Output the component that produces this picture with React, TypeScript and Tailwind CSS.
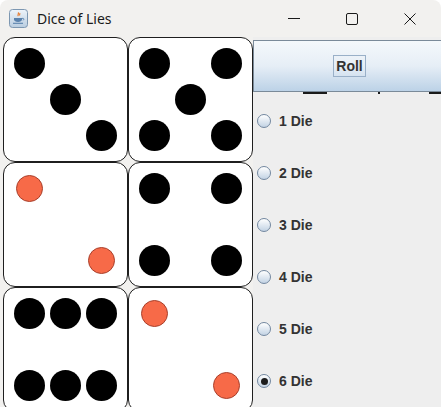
import React from 'react'

type Pip = 'black' | 'red'

const dice: { pips: number[]; kind: Pip }[] = [
  { pips: [0, 4, 8], kind: 'black' },
  { pips: [0, 2, 4, 6, 8], kind: 'black' },
  { pips: [0, 8], kind: 'red' },
  { pips: [0, 2, 6, 8], kind: 'black' },
  { pips: [0, 1, 2, 6, 7, 8], kind: 'black' },
  { pips: [0, 8], kind: 'red' },
]

const counts = [1, 2, 3, 4, 5, 6]

const JavaIcon: React.FC = () => (
  <svg width="19" height="19" viewBox="0 0 19 19">
    <defs>
      <linearGradient id="jbg" x1="0" y1="0" x2="0" y2="1">
        <stop offset="0" stopColor="#eef4fa" />
        <stop offset="1" stopColor="#b9cde0" />
      </linearGradient>
    </defs>
    <rect x="0.5" y="0.5" width="18" height="18" rx="3" fill="url(#jbg)" stroke="#7d97b1" />
    <path d="M9 3.5c1.5 1.2-1 2.2 0.3 3.6M10.6 4.2c0.9 0.8-0.6 1.4 0.2 2.3" stroke="#e8731f" strokeWidth="1.1" fill="none" />
    <path d="M5 9h8v1.2c0 1.8-1.7 2.8-4 2.8s-4-1-4-2.8z" fill="#5a82ad" />
    <path d="M13 9.4h1.2c0.9 0 0.9 1.8-0.4 1.8" stroke="#5a82ad" strokeWidth="0.9" fill="none" />
    <path d="M4 14.3h10" stroke="#5a82ad" strokeWidth="1.1" />
  </svg>
)

const Die: React.FC<{ pips: number[]; kind: Pip }> = ({ pips, kind }) => (
  <div className="w-[125px] h-[125px] rounded-[12px] border-[1.5px] border-[#1f1f1f] bg-white grid grid-cols-[repeat(3,36px)] grid-rows-[repeat(3,36px)] place-content-center place-items-center">
    {Array.from({ length: 9 }).map((_, i) =>
      pips.includes(i) ? (
        kind === 'black' ? (
          <div key={i} className="w-[31px] h-[31px] rounded-full bg-black" />
        ) : (
          <div key={i} className="w-[27px] h-[27px] rounded-full bg-[#f76a48] border border-[#a8402c]" />
        )
      ) : (
        <div key={i} />
      ),
    )}
  </div>
)

const Radio: React.FC<{ label: string; checked?: boolean }> = ({ label, checked }) => (
  <div className="h-[52px] flex items-center pl-[4px] gap-[8px]">
    <div className="w-[14px] h-[14px] rounded-full border border-[#7388a0] bg-gradient-to-b from-white to-[#c3d3e4] flex items-center justify-center">
      {checked && <div className="w-[7px] h-[7px] rounded-full bg-[#1c1c1c]" />}
    </div>
    <span className="text-[14px] font-bold text-[#333333]">{label}</span>
  </div>
)

export default function App() {
  return (
    <div className="w-[441px] h-[407px] overflow-hidden bg-white" style={{ fontFamily: '"Liberation Sans", Arial, sans-serif' }}>
      <div className="w-full h-full bg-[#f2f1ef] rounded-tl-[8px] rounded-tr-[8px] flex flex-col">
        {/* title bar */}
        <div className="h-[37px] shrink-0 flex items-center">
          <div className="ml-[9px]">
            <JavaIcon />
          </div>
          <span className="ml-[9px] text-[14px] text-[#1a1a1a]" style={{ fontFamily: '"Noto Sans", "Open Sans", sans-serif' }}>
            Dice of Lies
          </span>
          <div className="ml-auto flex items-center">
            <div className="w-[58px] flex justify-center">
              <div className="w-[12px] h-px bg-[#1a1a1a]" />
            </div>
            <div className="w-[58px] flex justify-center">
              <div className="w-[12px] h-[12px] border border-[#1a1a1a] rounded-[2px]" />
            </div>
            <div className="w-[58px] flex justify-center">
              <svg width="12" height="12" viewBox="0 0 12 12">
                <path d="M0.5 0.5L11.5 11.5M11.5 0.5L0.5 11.5" stroke="#1a1a1a" strokeWidth="1" />
              </svg>
            </div>
            <div className="w-[2px]" />
          </div>
        </div>

        {/* body */}
        <div className="flex flex-1 pl-[3px]">
          <div className="grid grid-cols-[125px_125px] auto-rows-[125px] w-[250px] shrink-0">
            {dice.map((d, i) => (
              <Die key={i} pips={d.pips} kind={d.kind} />
            ))}
          </div>
          <div className="flex-1 bg-[#eeeeee] pt-[3px] flex flex-col">
            <div className="h-[52px] mr-[-4px] border border-[#7a8a99] bg-gradient-to-b from-[#f4f8fb] via-[#e6eef6] to-[#bcd2e7] flex items-center justify-center">
              <span className="px-[2px] py-[1px] border border-[#99b0c8] text-[14px] font-bold text-[#333333] leading-[18px]">
                Roll
              </span>
            </div>
            <div className="h-[2px] flex">
              <div className="ml-[50px] w-[24px] bg-[#1a1a1a]" />
              <div className="ml-[51px] w-[2px] bg-[#1a1a1a]" />
              <div className="ml-[49px] w-[13px] bg-[#1a1a1a]" />
            </div>
            <div className="pt-px flex flex-col">
              {counts.map((n) => (
                <Radio key={n} label={`${n} Die`} checked={n === 6} />
              ))}
            </div>
          </div>
        </div>
      </div>
    </div>
  )
}
